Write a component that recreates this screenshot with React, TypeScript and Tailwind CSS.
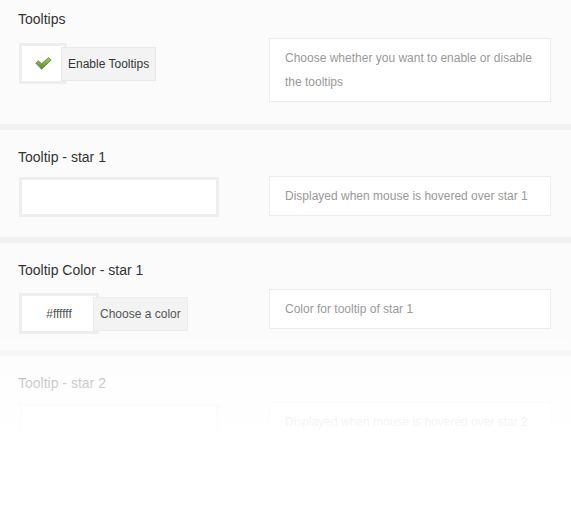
import React from "react";

type SectionProps = {
  title: string;
  description: React.ReactNode;
  control: React.ReactNode;
  padTop: string;
  padBottom: string;
  controlGap: string;
};

function Check() {
  return (
    <svg width="17" height="13" viewBox="0 0 17 13" aria-hidden="true">
      <defs>
        <linearGradient id="chk" x1="0" y1="0" x2="0" y2="1">
          <stop offset="0" stopColor="#a6cc62" />
          <stop offset="1" stopColor="#5a8727" />
        </linearGradient>
      </defs>
      <path
        d="M0.8 6.2 L3.4 3.8 L6.6 6.8 L13.4 0.6 L16.2 3 L6.6 12.2 Z"
        fill="url(#chk)"
        stroke="#557f26"
        strokeWidth="0.7"
        strokeLinejoin="round"
      />
    </svg>
  );
}

function Section({
  title,
  description,
  control,
  padTop,
  padBottom,
  controlGap,
}: SectionProps) {
  return (
    <section className={`flex bg-[#fbfbfb] pl-[18px] pr-[20px] ${padTop} ${padBottom}`}>
      <div className="flex w-[251px] flex-col items-start">
        <h3 className="text-[14px] leading-[20px] text-[#333]">{title}</h3>
        <div className={`ml-[1px] ${controlGap}`}>{control}</div>
      </div>
      <div className="mt-[29px] w-[282px] self-start border border-[#ececec] bg-white px-[15px] py-[7px] text-[12px] leading-[24px] text-[#999]">
        {description}
      </div>
    </section>
  );
}

function Separator() {
  return <div className="h-[6px] bg-[#f1f1f1]" />;
}

export default function App() {
  return (
    <div className="bg-white font-['Liberation_Sans',Arial,sans-serif]">
      <div className="relative h-[433px] overflow-hidden">
        <Section
          title="Tooltips"
          padTop="pt-[9px]"
          padBottom="pb-[22px]"
          controlGap="mt-[14px]"
          description="Choose whether you want to enable or disable the tooltips"
          control={
            <div className="flex items-center">
              <div className="flex h-[41px] w-[48px] items-center justify-center border-[3px] border-[#eeeeee] bg-white pb-[1px]">
                <Check />
              </div>
              <span className="relative ml-[-6px] flex h-[34px] items-center border border-[#e9e9e9] bg-[#f3f3f3] px-[6px] text-[12px] text-[#333]">
                Enable Tooltips
              </span>
            </div>
          }
        />
        <Separator />
        <Section
          title="Tooltip - star 1"
          padTop="pt-[17px]"
          padBottom="pb-[20px]"
          controlGap="mt-[10px]"
          description="Displayed when mouse is hovered over star 1"
          control={
            <div className="h-[40px] w-[200px] border-[3px] border-[#eeeeee] bg-white" />
          }
        />
        <Separator />
        <Section
          title="Tooltip Color - star 1"
          padTop="pt-[17px]"
          padBottom="pb-[16px]"
          controlGap="mt-[13px]"
          description="Color for tooltip of star 1"
          control={
            <div className="flex items-center">
              <div className="flex h-[41px] w-[80px] items-center justify-center border-[3px] border-[#eeeeee] bg-white text-[12px] text-[#555]">
                #ffffff
              </div>
              <span className="relative ml-[-6px] flex h-[34px] items-center border border-[#ededed] bg-[#f3f3f3] px-[6px] text-[12px] text-[#555]">
                Choose a color
              </span>
            </div>
          }
        />
        <Separator />
        <Section
          title="Tooltip - star 2"
          padTop="pt-[17px]"
          padBottom="pb-[20px]"
          controlGap="mt-[10px]"
          description="Displayed when mouse is hovered over star 2"
          control={
            <div className="h-[40px] w-[200px] border-[3px] border-[#eeeeee] bg-white" />
          }
        />
        {/* fade-out over the last rows */}
        <div className="pointer-events-none absolute inset-x-0 bottom-0 h-[100px] bg-[linear-gradient(to_bottom,rgba(255,255,255,0)_0px,rgba(255,255,255,0.5)_27px,rgba(255,255,255,0.74)_50px,rgba(255,255,255,0.88)_87px,rgba(255,255,255,0.93)_100px)]" />
      </div>
      <div className="h-[82px]" />
    </div>
  );
}
